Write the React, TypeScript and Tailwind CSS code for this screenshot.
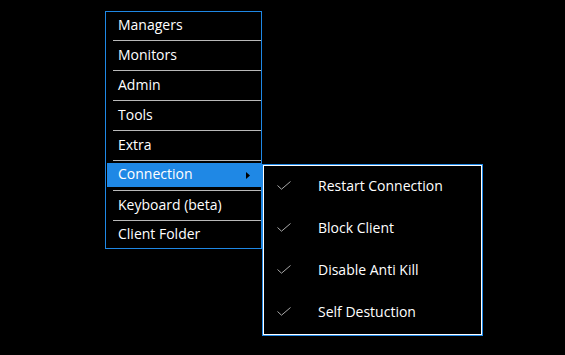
const mainItems = [
  'Managers',
  'Monitors',
  'Admin',
  'Tools',
  'Extra',
  'Connection',
  'Keyboard (beta)',
  'Client Folder',
];

const subItems = ['Restart Connection', 'Block Client', 'Disable Anti Kill', 'Self Destuction'];

function CheckIcon() {
  return (
    <svg width="14" height="9" viewBox="0 0 14 9" fill="none">
      <path d="M0.5 4.5 L4.5 8.2 L13.5 0.5" stroke="#a8a8a8" strokeWidth="1" />
    </svg>
  );
}

export default function App() {
  return (
    <div
      className="w-[565px] h-[355px] bg-black text-white overflow-hidden relative"
      style={{ fontFamily: '"Open Sans", "Noto Sans", sans-serif' }}
    >
      {/* Main context menu */}
      <div className="absolute left-[105px] top-[11px] w-[157px] border border-[#1f88e5] bg-black flex flex-col">
        {mainItems.map((label, i) => {
          const active = label === 'Connection';
          const h = i === 0 ? 'h-[28px]' : i === mainItems.length - 1 ? 'h-[27px]' : 'h-[29px]';
          return (
            <div key={label} className="flex flex-col">
              {i > 0 && <div className="h-px ml-[7px] bg-[#b9b9b9]" />}
              <div className={`${h} flex items-center pl-px`}>
                <div
                  className={`w-full h-[24px] flex items-center pl-[11px] pr-[11px] text-[14px] ${
                    active ? 'bg-[#1f88e5] mt-[-1px]' : ''
                  }`}
                >
                  <span className="flex-1 leading-[16px] -translate-y-[1px]">{label}</span>
                  {active && (
                    <svg width="4" height="7" viewBox="0 0 4 7">
                      <path d="M0 0 L4 3.5 L0 7 Z" fill="#000" />
                    </svg>
                  )}
                </div>
              </div>
            </div>
          );
        })}
      </div>

      {/* Connection submenu */}
      <div className="absolute left-[262px] top-[164px] w-[221px] border border-[#1f88e5] bg-black">
        <div className="border border-white flex flex-col">
          {subItems.map((label) => (
            <div key={label} className="h-[42px] flex items-center text-[14px]">
              <div className="w-[54px] pl-[13px] flex items-center -translate-y-[2px]">
                <CheckIcon />
              </div>
              <span className="leading-[16px] -translate-y-[1px]">{label}</span>
            </div>
          ))}
        </div>
      </div>
    </div>
  );
}
